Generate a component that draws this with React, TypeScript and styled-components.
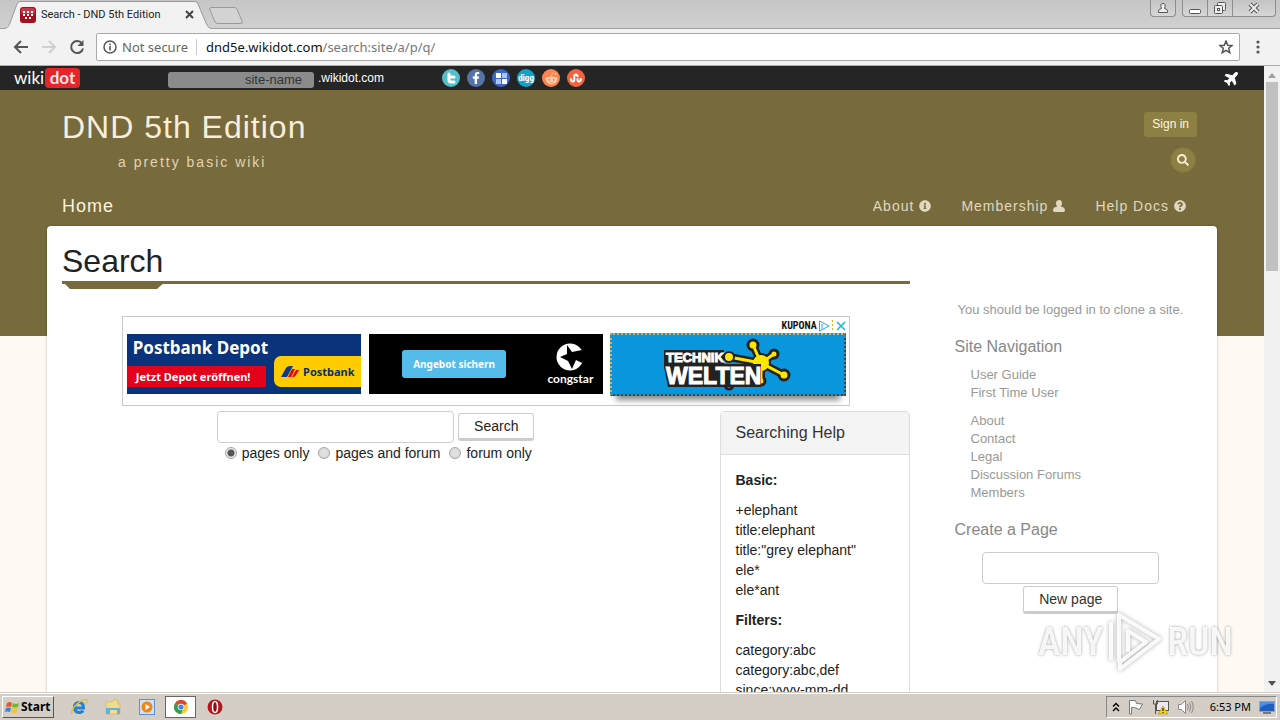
import React from "react";
import styled, { createGlobalStyle } from "styled-components";
import { FaInfoCircle, FaQuestionCircle, FaSearch, FaPlane, FaFacebookF, FaRedditAlien, FaStumbleupon } from "react-icons/fa";

const olive = "#776a3c";
const arial = '"Liberation Sans", Arial, sans-serif';
const ui = '"Noto Sans", Tahoma, sans-serif';
const narrow = '"Roboto Condensed", "Open Sans Condensed", Roboto, sans-serif';

const Global = createGlobalStyle`
  *, *::before, *::after { box-sizing: border-box; }
  body { margin: 0; font-family: ${arial}; font-size: 14px; line-height: 20px; color: #222; }
  h1, h2, h3, p, ul { margin: 0; padding: 0; font-weight: 400; }
  ul { list-style: none; }
  a { color: inherit; text-decoration: none; }
  button, input { font: inherit; color: inherit; margin: 0; }
  svg { display: block; flex: none; }
`;

const Desktop = styled.div`
  height: 100vh;
  display: flex;
  flex-direction: column;
  overflow: hidden;
`;

/* Browser frame */
const TabStrip = styled.div`
  flex: none;
  height: 29px;
  display: flex;
  align-items: flex-start;
  padding-left: 5px;
  background: linear-gradient(#c6c6c6, #d0d0d0);
  border-bottom: 1px solid #a0a0a0;
  font-family: Roboto, Tahoma, sans-serif;
`;
const Tab = styled.div`
  position: relative;
  width: 206px;
  height: 29px;
  display: flex;
  align-items: center;
  padding: 0 17px 0 15px;
  font-size: 11px;
  color: #222;
  > * { position: relative; }
  > svg:first-child { position: absolute; left: 0; top: 0; }
`;
const TabTitle = styled.span`
  flex: 1;
  margin-left: 5px;
  white-space: nowrap;
`;
const PlainButton = styled.button`
  border: 0;
  padding: 0;
  background: none;
  display: grid;
  place-items: center;
`;
const NewTab = styled(PlainButton)`
  padding-top: 6px;
  margin-left: -3px;
`;
const WindowButtons = styled.div`
  margin-left: auto;
  display: flex;
  padding-right: 4px;
`;
const WinButton = styled.button<{ $w: number; $first?: boolean; $last?: boolean; $gap?: boolean }>`
  width: ${(p) => p.$w}px;
  height: 17px;
  padding: 0;
  display: grid;
  place-items: center;
  background: linear-gradient(#c4c4c4, #d6d6d6);
  border: 1px solid #8e8e8e;
  border-top: 0;
  border-left-width: ${(p) => (p.$first ? 1 : 0)}px;
  border-radius: 0 0 ${(p) => (p.$last ? 4 : 0)}px ${(p) => (p.$first ? 4 : 0)}px;
  margin-right: ${(p) => (p.$gap ? 6 : 0)}px;
`;
const Toolbar = styled.div`
  flex: none;
  height: 37px;
  display: flex;
  align-items: center;
  gap: 10px;
  padding: 0 16px 0 12px;
  background: #f2f2f2;
  border-bottom: 1px solid #b1adb2;
`;
const AddressBar = styled.div`
  flex: 1;
  height: 28px;
  display: flex;
  align-items: center;
  padding: 0 6px;
  background: #fff;
  border: 1px solid #a9a9a9;
  border-radius: 2px;
  font-family: ${ui};
  font-size: 13px;
  white-space: nowrap;
`;
const Security = styled.span`
  margin-left: 5px;
  padding-right: 8px;
  border-right: 1px solid #c8c8c8;
  line-height: 16px;
  color: #666;
`;
const Url = styled.span`
  flex: 1;
  margin-left: 9px;
  color: #777;
  b { font-weight: 400; color: #111; }
`;

/* Site */
const Viewport = styled.div`
  flex: 1;
  min-height: 0;
  display: flex;
`;
const Site = styled.div`
  flex: 1;
  min-width: 0;
  overflow: hidden;
`;
const Scrollbar = styled.div`
  flex: none;
  width: 16px;
  display: flex;
  flex-direction: column;
  justify-content: space-between;
  align-items: center;
  padding: 7px 0 6px;
  background: #f1f1f1;
`;
const Thumb = styled.div`
  width: 12px;
  height: 189px;
  margin: 4px 0 auto;
  background: #c1c1c1;
`;
const TopBar = styled.div`
  height: 24px;
  display: flex;
  align-items: center;
  padding: 0 24px 0 14px;
  background: #252525;
  color: #fff;
  font-size: 12px;
`;
const Logo = styled.a`
  width: 66px;
  display: flex;
  align-items: center;
  justify-content: space-between;
  font-family: Lato, sans-serif;
  font-size: 17px;
  line-height: 20px;
  b {
    width: 35px;
    text-align: center;
    font-weight: 700;
    background: #e8242b;
    border-radius: 4px;
    color: #ffe4e4;
  }
`;
const SiteName = styled.input`
  width: 146px;
  height: 16px;
  margin: 3px 4px 0 88px;
  padding: 0 12px;
  border: 0;
  border-radius: 3px;
  background: #8b8b8b;
  color: #333;
  font-size: 13px;
  text-align: right;
`;
const Social = styled.nav`
  display: flex;
  gap: 7px;
  margin: 0 auto 0 58px;
`;
const SocialLink = styled.a<{ $bg: string }>`
  width: 18px;
  height: 18px;
  display: grid;
  place-items: center;
  border-radius: 50%;
  background: ${(p) => p.$bg};
  color: #fff;
  font: bold 9px/16px ${narrow};
`;
const Backdrop = styled.div`
  min-height: 100%;
  background: linear-gradient(${olive} 246px, #fefaf3 246px);
`;
const Container = styled.div`
  max-width: 1170px;
  margin: 0 auto;
`;
const Header = styled.header`
  height: 136px;
  display: flex;
  flex-direction: column;
  justify-content: space-between;
  padding: 17px 15px 10px;
  color: #e6dfc8;
`;
const HeaderTop = styled.div`
  display: flex;
  justify-content: space-between;
  padding-right: 5px;
`;
const SiteTitle = styled.h1`
  font-size: 32px;
  line-height: 40px;
  letter-spacing: 1px;
  color: #f8eedb;
`;
const Tagline = styled.p`
  padding: 5px 0 0 56px;
  letter-spacing: 2px;
  color: #e0d4b4;
`;
const Account = styled.div`
  display: flex;
  flex-direction: column;
  align-items: flex-end;
  gap: 10px;
  padding-top: 5px;
`;
const SignIn = styled.a`
  padding: 0 8px;
  border-radius: 3px;
  background: #8d8045;
  color: #fbf5e0;
  font-size: 12px;
  line-height: 25px;
`;
const RoundButton = styled.button`
  width: 26px;
  height: 26px;
  margin-right: 1px;
  padding: 0;
  display: grid;
  place-items: center;
  border: 1px solid #857637;
  border-radius: 50%;
  background: #8d8045;
  color: #f8ecd0;
`;
const MainNav = styled.nav`
  display: flex;
  align-items: center;
  gap: 30px;
  padding-right: 16px;
  letter-spacing: 1px;
`;
const NavLink = styled.a<{ $home?: boolean }>`
  display: flex;
  align-items: center;
  gap: 5px;
  margin-right: ${(p) => (p.$home ? "auto" : "0")};
  font-size: ${(p) => (p.$home ? 18 : 14)}px;
  color: ${(p) => (p.$home ? "#fdf3de" : "#e0d8bf")};
`;
const Card = styled.div`
  display: flex;
  min-height: 600px;
  background: #fff;
  border-radius: 4px 4px 0 0;
  box-shadow: 0 0 3px rgba(0, 0, 0, 0.25);
`;
const Main = styled.main`
  width: 75%;
  padding: 15px 15px 0;
`;
const PageTitle = styled.h1`
  display: inline-block;
  font-size: 32px;
  line-height: 40px;
`;
const TitleRule = styled.div`
  height: 3px;
  background: ${olive};
  &::after {
    content: "";
    display: block;
    width: 104px;
    height: 8px;
    background: ${olive};
    clip-path: polygon(0 0, 100% 0, 95px 100%, 8px 100%);
  }
`;
const AdFrame = styled.div`
  max-width: 728px;
  height: 90px;
  margin: 32px auto 5px;
  display: flex;
  flex-direction: column;
  border: 1px solid #c8c8c8;
`;
const AdTop = styled.div`
  height: 17px;
  display: flex;
  align-items: center;
  justify-content: flex-end;
  gap: 1px;
  padding-right: 2px;
  font: bold 10px/16px ${narrow};
  color: #111;
`;
const AdRow = styled.div`
  flex: 1;
  display: grid;
  grid-template-columns: repeat(3, minmax(0, 1fr));
  align-items: start;
  gap: 8px;
  padding: 0 3px 0 4px;
  font-family: "Noto Sans", sans-serif;
  font-weight: 700;
  color: #fff;
`;
const Postbank = styled.a`
  position: relative;
  height: 60px;
  overflow: hidden;
  background: #0a337c;
  white-space: nowrap;
  h3 { padding: 3px 0 0 6px; font-size: 17px; font-weight: 700; line-height: 22px; }
  p { width: 139px; margin-top: 7px; padding-left: 9px; background: #e2001a; font-size: 11px; font-weight: 700; line-height: 21px; }
`;
const PostbankBadge = styled.span`
  position: absolute;
  right: 0;
  top: 22px;
  width: 87px;
  height: 31px;
  display: flex;
  align-items: center;
  gap: 4px;
  padding-left: 7px;
  background: #fc0;
  border-radius: 7px 0 0 7px;
  color: #0b2d66;
  font-size: 11px;
`;
const Congstar = styled.a`
  height: 60px;
  display: flex;
  align-items: center;
  justify-content: space-between;
  padding: 0 10px 0 33px;
  background: #000;
`;
const Offer = styled.span`
  width: 104px;
  border-radius: 3px;
  background: #55bbe8;
  font-size: 10px;
  line-height: 28px;
  text-align: center;
`;
const CongstarMark = styled.span`
  display: flex;
  flex-direction: column;
  align-items: center;
  padding-top: 2px;
  font-family: Lato, sans-serif;
  font-size: 12px;
  line-height: 16px;
`;
const Technik = styled.a`
  height: 63px;
  margin: -1px 0 0 -1px;
  display: grid;
  place-items: center;
  background: #0a96dc;
  border: 2px dotted #f2a33c;
  border-right-color: #5b3e1e;
  border-bottom-color: #5b3e1e;
  box-shadow: 0 10px 6px -6px #888;
`;
const Columns = styled.div`
  display: flex;
  align-items: flex-start;
  gap: 30px;
`;
const SearchForm = styled.form`
  flex: 1;
  display: flex;
  flex-direction: column;
  align-items: center;
`;
const Line = styled.div`
  display: flex;
  gap: 4px;
  align-items: center;
`;
const TextBox = styled.input<{ $w: number }>`
  width: ${(p) => p.$w}px;
  height: 32px;
  padding: 4px 8px;
  border: 1px solid #ccc;
  border-radius: 4px;
  background: #fff;
`;
const Button = styled.button`
  height: 28px;
  padding: 0 15px;
  border: 1px solid #ccc;
  border-bottom-width: 3px;
  border-radius: 3px;
  background: #fff;
  line-height: 24px;
`;
const Choice = styled.label`
  display: flex;
  align-items: center;
  gap: 5px;
  margin-left: 5px;
  input {
    appearance: none;
    width: 12px;
    height: 12px;
    border: 1px solid #a5a5a5;
    border-radius: 50%;
    background: radial-gradient(#e3e3e3, #d6d6d6);
  }
  input:checked { background: radial-gradient(#555 0 3px, #e6e6e6 4px); }
`;
const Help = styled.aside`
  width: 190px;
  border: 1px solid #ddd;
  border-radius: 4px;
  h2 { padding: 11px 15px; background: #f4f4f4; border-bottom: 1px solid #ddd; font-size: 16px; line-height: 20px; color: #333; }
  > div { padding: 15px; display: grid; gap: 10px; white-space: nowrap; }
`;
const Sidebar = styled.aside`
  width: 25%;
  padding: 75px 30px 0;
  font-size: 13px;
  line-height: 18px;
  color: #999;
  p { padding-left: 3px; white-space: nowrap; }
  h2 { margin: 18px 0 9px; font-size: 16px; line-height: 20px; color: #888; }
  ul { margin-bottom: 10px; padding-left: 16px; }
`;
const NewPage = styled.form`
  display: flex;
  flex-direction: column;
  align-items: center;
  gap: 2px;
  margin-top: 12px;
  font-size: 14px;
  color: #333;
`;
const Watermark = styled.div`
  position: fixed;
  right: 47px;
  bottom: 48px;
  display: flex;
  align-items: center;
  gap: 5px;
  pointer-events: none;
  font: 500 38px/60px ${narrow};
  color: rgba(255, 255, 255, 0.9);
  text-shadow: 0 0 3px rgba(0, 0, 0, 0.4);
  svg { filter: drop-shadow(0 0 2px rgba(0, 0, 0, 0.35)); }
`;

/* Windows taskbar */
const Taskbar = styled.footer`
  flex: none;
  height: 28px;
  display: flex;
  align-items: center;
  padding: 1px 3px 0 2px;
  background: #d5cec6;
  border-top: 1px solid #d5cec6;
  box-shadow: inset 0 1px #fff;
  font-family: ${ui};
  font-size: 11px;
  color: #000;
`;
const Start = styled.button`
  height: 22px;
  display: flex;
  align-items: center;
  gap: 1px;
  width: 52px;
  padding: 0 2px;
  background: #d5cec6;
  border: 1px solid #fff;
  border-right-color: #555;
  border-bottom-color: #555;
  font-size: 12px;
  font-weight: 700;
`;
const Launcher = styled(PlainButton)<{ $active?: boolean }>`
  width: 31px;
  height: 22px;
  margin-right: 3px;
  background: ${(p) => (p.$active ? "#fff" : "none")};
  border: ${(p) => (p.$active ? "1px solid #666" : "0")};
`;
const Launchers = styled.div`
  display: flex;
  margin: 0 auto 0 9px;
`;
const Tray = styled.div`
  height: 22px;
  width: 171px;
  display: flex;
  align-items: center;
  justify-content: space-between;
  padding: 0 1px 0 5px;
  border: 1px solid #fff;
  border-left-color: #888;
  border-top-color: #888;
`;
const Clock = styled.span`
  padding-left: 8px;
`;

const TabShape = () => (
  <svg width="206" height="29">
    <path d="M0 28.5C3 28 4 25 5 23L12 4Q13 1.500 15 1.500H190Q192 1.500 193 4L201 23Q203 28 206 28.500V29H0Z" fill="#f2f2f2" />
    <path d="M0 28.500C3 28 4 25 5 23L12 4Q13 1.500 15 1.500H190Q192 1.500 193 4L201 23Q203 28 206 28.500" fill="none" stroke="#9a9a9a" />
  </svg>
);
const Favicon = () => (
  <svg width="16" height="16">
    <rect width="16" height="16" rx="3" fill="#a3111f" />
    <rect x="1" y="1" width="14" height="6" rx="2" fill="#c4394a" />
    <g fill="#fff">
      <rect x="3" y="4" width="2" height="2" /><rect x="7" y="4" width="2" height="2" /><rect x="11" y="4" width="2" height="2" />
      <rect x="3" y="7" width="2" height="2" /><rect x="7" y="7" width="2" height="2" /><rect x="11" y="7" width="2" height="2" />
      <rect x="5" y="10" width="2" height="2" /><rect x="9" y="10" width="2" height="2" />
    </g>
  </svg>
);
const Arrow = ({ dim }: { dim?: boolean }) => (
  <svg width="18" height="18" viewBox="0 0 18 18" fill="none" stroke={dim ? "#d0d0d0" : "#555"} strokeWidth="2">
    {dim ? <path d="M2 9H15M9 3L15 9L9 15" /> : <path d="M16 9H3M9 3L3 9L9 15" />}
  </svg>
);
const UserGlyph = () => (
  <svg width="12" height="12" viewBox="0 0 12 12" fill="currentColor">
    <path d="M6 0C8 0 9 1.400 9 3.200C9 4.800 8.400 6 7.600 6.500C10.500 6.700 12 8.200 12 10.600Q12 12 10.500 12H1.500Q0 12 0 10.600C0 8.200 1.500 6.700 4.400 6.500C3.600 6 3 4.800 3 3.200C3 1.400 4 0 6 0Z" />
  </svg>
);
const CongstarLogo = () => (
  <svg width="28" height="28" viewBox="0 0 28 28">
    <circle cx="14" cy="14" r="13.500" fill="#fff" />
    <path d="M11 2L16 9L26 7L30 14L26 20L20 17L16 26L12 18L4 14L11 11Z" fill="#000" />
  </svg>
);
const atoms: [number, number, number][] = [[91, 8, 5], [112, 17, 4], [122, 38, 5], [99, 44, 4], [67, 48, 4]];
const bonds = "M99 26L91 8M99 26L112 17M99 26L122 38M99 26L67 20M99 26L99 44";
const TechnikLogo = () => (
  <svg width="132" height="56" viewBox="0 0 132 56">
    <path d={bonds} stroke="#222" strokeWidth="8" />
    {atoms.map(([x, y, r]) => <circle key={`${x}-${y}`} cx={x} cy={y} r={r} fill="#ffe600" stroke="#222" strokeWidth="3" />)}
    <circle cx="99" cy="26" r="9" fill="#ffe600" stroke="#222" strokeWidth="2" />
    <path d={bonds} stroke="#ffe600" strokeWidth="3" />
    <path d="M2 13H62V27H99V50H6L2 30Z" fill="#222" />
    <g fontFamily="Liberation Sans, sans-serif" fontWeight="700" fill="#fff" stroke="#fff" strokeWidth="1">
      <text x="4" y="25" fontSize="13">TECHNIK</text>
      <text x="4" y="47" fontSize="23">WELTEN</text>
    </g>
    <circle cx="67" cy="20" r="5" fill="#ffe600" stroke="#222" strokeWidth="2" />
  </svg>
);
const Delicious = () => (
  <svg width="11" height="11"><path d="M0 0H5V5H0ZM6 6H11V11H6Z" fill="#fff" /><path d="M6 0H11V5H6ZM0 6H5V11H0Z" fill="#a9c3f5" /></svg>
);

const links1 = ["User Guide", "First Time User"];
const links2 = ["About", "Contact", "Legal", "Discussion Forums", "Members"];
const modes = ["pages only", "pages and forum", "forum only"];

export default function App() {
  return (
    <Desktop>
      <Global />
      <TabStrip>
        <Tab>
          <TabShape />
          <Favicon />
          <TabTitle>Search - DND 5th Edition</TabTitle>
          <PlainButton aria-label="Close tab">
            <svg width="9" height="9"><path d="M1 1L8 8M8 1L1 8" stroke="#444" strokeWidth="2" /></svg>
          </PlainButton>
        </Tab>
        <NewTab aria-label="New tab">
          <svg width="36" height="19"><path d="M3 1.500H26Q28 1.500 29 3L34 15Q35 17.500 33 17.500H10Q8 17.500 7 16L2 4Q1 1.500 3 1.500Z" fill="#d3d3d3" stroke="#999" /></svg>
        </NewTab>
        <WindowButtons>
          <WinButton $w={26} $first $last $gap aria-label="Profile">
            <svg width="12" height="12" fill="#eee" stroke="#555"><path d="M1.500 10.500V9Q1.500 7 4.500 6.500Q2.500 1.500 6 1.500Q9.500 1.500 7.500 6.500Q10.500 7 10.500 9V10.500Z" /></svg>
          </WinButton>
          <WinButton $w={26} $first aria-label="Minimize">
            <svg width="12" height="12" fill="#fff" stroke="#555"><rect x="0.500" y="7.500" width="11" height="4" rx="1" /></svg>
          </WinButton>
          <WinButton $w={25} aria-label="Restore">
            <svg width="14" height="13" fill="#eee" stroke="#555"><rect x="4.500" y="0.500" width="8" height="8" rx="1" /><rect x="1.500" y="3.500" width="8" height="8" rx="1" /><rect x="4.500" y="6.500" width="2" height="2" /></svg>
          </WinButton>
          <WinButton $w={43} $last aria-label="Close">
            <svg width="14" height="12"><path d="M3 2L11 10M11 2L3 10" stroke="#555" strokeWidth="4" /><path d="M3 2L11 10M11 2L3 10" stroke="#eee" strokeWidth="2" /></svg>
          </WinButton>
        </WindowButtons>
      </TabStrip>
      <Toolbar>
        <PlainButton aria-label="Back"><Arrow /></PlainButton>
        <PlainButton aria-label="Forward"><Arrow dim /></PlainButton>
        <PlainButton aria-label="Reload">
          <svg width="18" height="18" fill="none" stroke="#555" strokeWidth="2"><path d="M14 5.500A6 6 0 1 0 15 10.500" /><path d="M15.500 2V8H9.500Z" fill="#555" stroke="none" /></svg>
        </PlainButton>
        <AddressBar>
          <svg width="14" height="14" fill="none" stroke="#555"><circle cx="7" cy="7" r="6" strokeWidth="1.500" /><path d="M7 6V10.500M7 3.500V5" strokeWidth="1.600" /></svg>
          <Security>Not secure</Security>
          <Url><b>dnd5e.wikidot.com</b>/search:site/a/p/q/</Url>
          <svg width="14" height="14" viewBox="0 0 14 14"><path d="M7 1L8.700 5.200L13 5.500L9.700 8.300L10.800 12.700L7 10.300L3.200 12.700L4.300 8.300L1 5.500L5.300 5.200Z" fill="none" stroke="#555" strokeWidth="1.500" /></svg>
        </AddressBar>
        <PlainButton aria-label="Menu">
          <svg width="14" height="14" fill="#555"><circle cx="8" cy="2" r="1.600" /><circle cx="8" cy="7" r="1.600" /><circle cx="8" cy="12" r="1.600" /></svg>
        </PlainButton>
      </Toolbar>

      <Viewport>
        <Site>
          <TopBar>
            <Logo href="#">wiki<b>dot</b></Logo>
            <SiteName aria-label="Site name" defaultValue="site-name" />
            .wikidot.com
            <Social>
              <SocialLink href="#" $bg="#52bfcb" aria-label="Twitter">
                <svg width="10" height="12"><path d="M3 2V8Q3 10 5 10H8M3 5H8" fill="none" stroke="#fff" strokeWidth="3" strokeLinecap="round" /></svg>
              </SocialLink>
              <SocialLink href="#" $bg="#5573a7" aria-label="Facebook"><FaFacebookF size={12} /></SocialLink>
              <SocialLink href="#" $bg="#3968c9" aria-label="Delicious"><Delicious /></SocialLink>
              <SocialLink href="#" $bg="#11a3cb">digg</SocialLink>
              <SocialLink href="#" $bg="#f98550" aria-label="Reddit"><FaRedditAlien size={13} color="#ffd0b0" /></SocialLink>
              <SocialLink href="#" $bg="#f4633e" aria-label="StumbleUpon"><FaStumbleupon size={12} /></SocialLink>
            </Social>
            <svg width="16" height="16" viewBox="0 0 16 16"><g transform="rotate(-45 8 8)"><FaPlane size={16} color="#fff" /></g></svg>
          </TopBar>
          <Backdrop>
            <Container>
              <Header>
                <HeaderTop>
                  <div>
                    <SiteTitle>DND 5th Edition</SiteTitle>
                    <Tagline>a pretty basic wiki</Tagline>
                  </div>
                  <Account>
                    <SignIn href="#">Sign in</SignIn>
                    <RoundButton aria-label="Search this site"><FaSearch size={12} /></RoundButton>
                  </Account>
                </HeaderTop>
                <MainNav>
                  <NavLink href="#" $home>Home</NavLink>
                  <NavLink href="#">About <FaInfoCircle size={12} /></NavLink>
                  <NavLink href="#">Membership <UserGlyph /></NavLink>
                  <NavLink href="#">Help Docs <FaQuestionCircle size={12} /></NavLink>
                </MainNav>
              </Header>
              <Card>
                <Main>
                  <PageTitle>Search</PageTitle>
                  <TitleRule />
                  <AdFrame>
                    <AdTop>
                      KUPONA
                      <svg width="12" height="12" fill="none" stroke="#1fb3d8"><path d="M1.500 1L11 6L1.500 11ZM4 4V9" /></svg>
                      <svg width="3" height="12"><path d="M1.500 0V12" stroke="#f5a623" strokeDasharray="2 2" /></svg>
                      <svg width="12" height="12" stroke="#1fb3d8" strokeWidth="1.500"><path d="M2 2L10 10M10 2L2 10" /></svg>
                    </AdTop>
                    <AdRow>
                      <Postbank href="#">
                        <h3>Postbank Depot</h3>
                        <p>Jetzt Depot eröffnen!</p>
                        <PostbankBadge>
                          <svg width="18" height="12"><path d="M0 11L5 2Q6 0 9 0H12L6 11Z" fill="#0b3c8c" /><path d="M7 11L11 3H14L10 11Z" fill="#e2001a" /><path d="M11 11L15 4H18L15 9Q14 11 12 11Z" fill="#e2001a" /></svg>
                          Postbank
                        </PostbankBadge>
                      </Postbank>
                      <Congstar href="#">
                        <Offer>Angebot sichern</Offer>
                        <CongstarMark><CongstarLogo />congstar</CongstarMark>
                      </Congstar>
                      <Technik href="#" aria-label="Technik Welten"><TechnikLogo /></Technik>
                    </AdRow>
                  </AdFrame>
                  <Columns>
                    <SearchForm onSubmit={(e) => e.preventDefault()}>
                      <Line>
                        <TextBox $w={237} aria-label="Search terms" />
                        <Button>Search</Button>
                      </Line>
                      <Line>
                        {modes.map((m, i) => (
                          <Choice key={m}><input type="radio" name="area" defaultChecked={i === 0} />{m}</Choice>
                        ))}
                      </Line>
                    </SearchForm>
                    <Help>
                      <h2>Searching Help</h2>
                      <div>
                        <strong>Basic:</strong>
                        <p>+elephant<br />title:elephant<br />title:"grey elephant"<br />ele*<br />ele*ant</p>
                        <strong>Filters:</strong>
                        <p>category:abc<br />category:abc,def<br />since:yyyy-mm-dd</p>
                      </div>
                    </Help>
                  </Columns>
                </Main>
                <Sidebar>
                  <p>You should be logged in to clone a site.</p>
                  <h2>Site Navigation</h2>
                  <ul>{links1.map((l) => <li key={l}><a href="#">{l}</a></li>)}</ul>
                  <ul>{links2.map((l) => <li key={l}><a href="#">{l}</a></li>)}</ul>
                  <h2>Create a Page</h2>
                  <NewPage onSubmit={(e) => e.preventDefault()}>
                    <TextBox $w={177} aria-label="New page name" />
                    <Button>New page</Button>
                  </NewPage>
                </Sidebar>
              </Card>
            </Container>
          </Backdrop>
        </Site>
        <Scrollbar>
          <svg width="8" height="5"><path d="M0 5L4 0L8 5Z" fill="#a0a0a0" /></svg>
          <Thumb />
          <svg width="8" height="5"><path d="M0 0L4 5L8 0Z" fill="#505050" /></svg>
        </Scrollbar>
      </Viewport>

      <Watermark>
        ANY
        <svg width="54" height="60" viewBox="0 0 54 60" fill="none" stroke="#fff" strokeOpacity="0.9" strokeWidth="4" strokeLinejoin="round">
          <path d="M3 10V48M11 50V3L51 27L12 57V50L38 30L20 19V40" />
        </svg>
        RUN
      </Watermark>

      <Taskbar>
        <Start>
          <svg width="15" height="15"><path d="M2 3Q5 1 7 3L6 7Q3 6 1 7Z" fill="#e8562a" /><path d="M8 3Q11 5 14 3L13 7Q10 8 7 7Z" fill="#6fb53a" /><path d="M1 8Q3 7 6 8L5 12Q2 11 0 12Z" fill="#3a87d6" /><path d="M7 8Q10 9 13 8L12 12Q9 14 6 12Z" fill="#f7c32e" /></svg>
          Start
        </Start>
        <Launchers>
          <Launcher aria-label="Internet Explorer">
            <svg width="18" height="18" fill="none"><path d="M5 10H13.500Q13.500 4.500 9 4.500Q4.500 4.500 4.500 9.500Q5 14.500 9 14.500Q12 14.500 13 12.500" stroke="#2383d1" strokeWidth="3" /><path d="M2 16Q0 13 7 6Q14 0 17 2Q18 3 16 6" stroke="#e8bd3b" strokeWidth="1.400" /></svg>
          </Launcher>
          <Launcher aria-label="Explorer">
            <svg width="18" height="16"><path d="M2 3H8L9 1H14V5H16V15H2Z" fill="#f2dc8c" stroke="#cfae55" strokeWidth=".6" /><path d="M2 15V9H16V15H13V11H6V15Z" fill="#62b3dc" /></svg>
          </Launcher>
          <Launcher aria-label="Media Player">
            <svg width="16" height="16"><rect x=".5" y=".5" width="15" height="15" fill="#cfe1f5" stroke="#5b92cf" /><circle cx="8" cy="8" r="5.500" fill="#f08519" /><path d="M6.500 5L11 8L6.500 11Z" fill="#fff" /></svg>
          </Launcher>
          <Launcher $active aria-label="Chrome">
            <svg width="14" height="14" viewBox="0 0 14 14"><circle cx="7" cy="7" r="7" fill="#f9cb2e" /><path d="M7 7L.9 3.500A7 7 0 0 1 13.100 3.500Z" fill="#dd4436" /><path d="M7 7L.9 3.500A7 7 0 0 0 7 14L9 9Z" fill="#2f9e52" /><circle cx="7" cy="7" r="3.300" fill="#fff" /><circle cx="7" cy="7" r="2.600" fill="#4285f4" /></svg>
          </Launcher>
          <Launcher aria-label="Opera">
            <svg width="16" height="16"><circle cx="8" cy="8" r="7.500" fill="#b3161b" /><ellipse cx="8" cy="8" rx="2.500" ry="5.500" fill="#8d0d10" stroke="#fff" strokeWidth="1.500" /></svg>
          </Launcher>
        </Launchers>
        <Tray>
          <svg width="8" height="10" fill="none" stroke="#000" strokeWidth="1.400"><path d="M1 4.500L4 1.500L7 4.500M1 9L4 6L7 9" /></svg>
          <svg width="16" height="16" fill="#fff" stroke="#777"><path d="M1.500 15V1.500H7.500L8.500 4.500L14.500 5L11.500 10.500L6.500 8.500H3.500V15Z" /></svg>
          <svg width="17" height="16"><rect x="4.500" y="2.500" width="12" height="9" fill="#e9e9f5" stroke="#555" /><path d="M1.500 1V5H5.500V1M3.500 5V15" fill="none" stroke="#555" /><path d="M11 7L16 15H6Z" fill="#f9d21b" stroke="#b08b00" strokeWidth=".6" /><path d="M11 9V12M11 13V14" stroke="#000" /></svg>
          <svg width="17" height="16" fill="none" stroke="#888"><path d="M1.500 5.500H4.500L8.500 1.500V14.500L4.500 10.500H1.500Z" fill="#fff" /><path d="M10.500 5Q12 8 10.500 11M12.500 3.500Q15 8 12.500 12.500M14.500 2Q18 8 14.500 14" /></svg>
          <Clock>6:53 PM</Clock>
          <svg width="16" height="13"><rect x=".5" y=".5" width="15" height="10" fill="#1f5fc0" stroke="#8aa4c8" /><path d="M1 7Q8 2 15 3V1H1Z" fill="#4b90e6" /><rect x="4" y="11" width="8" height="2" fill="#777" /></svg>
        </Tray>
      </Taskbar>
    </Desktop>
  );
}
